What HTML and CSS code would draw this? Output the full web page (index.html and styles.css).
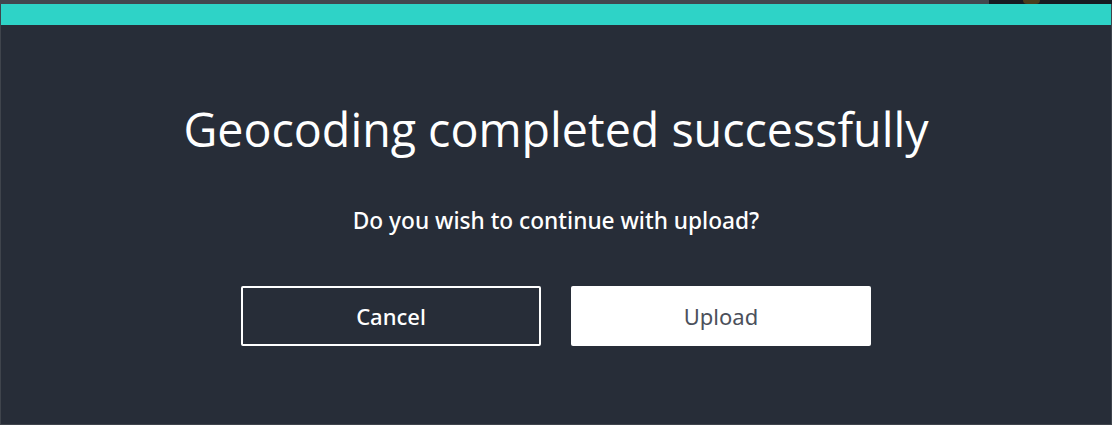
FILE: index.html
```html
<!DOCTYPE html>
<html>
<head>
    <meta charset="UTF-8">
    <title>Geocoding</title>
    <link rel="stylesheet" href="styles.css">
</head>
<body>
    <div class="backdrop">
        <div class="backdrop-left"></div>
        <div class="backdrop-right"><span class="backdrop-dot"></span></div>
    </div>
    <div class="modal">
        <div class="modal-bar"></div>
        <div class="modal-body">
            <h1 class="modal-title">Geocoding completed successfully</h1>
            <p class="modal-text">Do you wish to continue with upload?</p>
            <div class="modal-actions">
                <button class="btn btn-outline">Cancel</button>
                <button class="btn btn-solid">Upload</button>
            </div>
        </div>
    </div>
</body>
</html>
```

FILE: styles.css
```css
html, body {
    margin: 0;
    height: 100%;
}
body {
    background-color: #3f444c;
    font-family: "Open Sans", "Noto Sans", sans-serif;
    display: flex;
    flex-direction: column;
    overflow: hidden;
}
.backdrop {
    display: flex;
    height: 4px;
    flex-shrink: 0;
}
.backdrop-left {
    flex: 1;
    background-color: #42474f;
}
.backdrop-right {
    width: 123px;
    background-color: #161b22;
    position: relative;
}
.backdrop-dot {
    position: absolute;
    left: 34px;
    top: 0;
    width: 17px;
    height: 4px;
    background-color: #4a3d1c;
    border-radius: 0 0 8px 8px;
}
.modal {
    flex: 1;
    margin: 0 1px 1px 1px;
    background-color: #272d38;
    display: flex;
    flex-direction: column;
}
.modal-bar {
    height: 21px;
    background-color: #2ed3c7;
}
.modal-body {
    display: flex;
    flex-direction: column;
    align-items: center;
    padding-top: 76px;
}
.modal-title {
    margin: 0;
    color: #ffffff;
    font-size: 46.6px;
    font-weight: 400;
    line-height: 56px;
}
.modal-text {
    margin: 49px 0 0 0;
    color: #ffffff;
    font-family: "Noto Sans", "Open Sans", sans-serif;
    font-size: 22.7px;
    font-weight: 500;
    line-height: 30px;
}
.modal-actions {
    display: flex;
    gap: 30px;
    margin-top: 50px;
}
.btn {
    width: 300px;
    height: 60px;
    font-family: "Noto Sans", "Open Sans", sans-serif;
    font-size: 22px;
    cursor: pointer;
    box-sizing: border-box;
    border-radius: 2px;
}
.btn-outline {
    background-color: transparent;
    border: 2px solid #ffffff;
    color: #ffffff;
    font-weight: 500;
}
.btn-solid {
    background-color: #ffffff;
    border: none;
    color: #4b505b;
    font-weight: 400;
}
```
